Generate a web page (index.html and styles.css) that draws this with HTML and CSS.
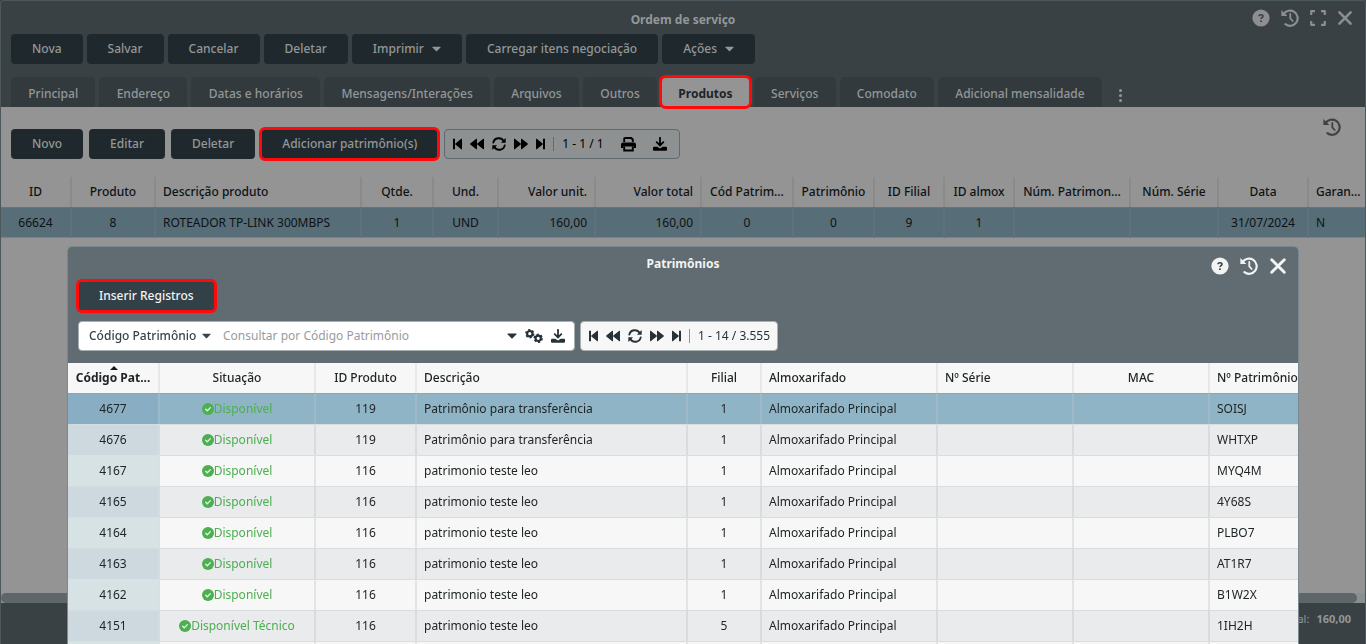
FILE: index.html
```html
<!DOCTYPE html>
<html lang="pt-BR">
<head>
<meta charset="utf-8">
<title>Ordem de serviço</title>
<link rel="stylesheet" href="styles.css">
</head>
<body>
<svg class="sprite" aria-hidden="true">
  <symbol id="help" viewBox="0 0 18 18"><circle cx="9" cy="9" r="8.600" fill="currentColor"/><path d="M7 7.300c.1-2.200 4.200-2.200 4 .1-.1 1.200-2 1.300-2 2.600" fill="none" class="cut" stroke-width="1.500"/><rect x="8.100" y="11.300" width="1.700" height="1.700" class="cutfill"/></symbol>
  <symbol id="history" viewBox="0 0 18 18"><path d="M2.600 5.200A7.600 7.600 0 1 1 4.400 15.200" fill="none" stroke="currentColor" stroke-width="2.200" stroke-linecap="round"/><path d="M.4.900v6h6z" fill="currentColor"/><path d="M9.300 5v4.400l2.400 2.600" fill="none" stroke="currentColor" stroke-width="1.800" stroke-linecap="round"/></symbol>
  <symbol id="expand" viewBox="0 0 16 16"><path d="M1.200 5V1.200H5M11 1.200h3.800V5M14.800 11v3.800H11M5 14.800H1.200V11" fill="none" stroke="currentColor" stroke-width="2.200" stroke-linejoin="round"/></symbol>
  <symbol id="close" viewBox="0 0 16 16"><path d="M2.400 2.400l11.200 11.200M13.600 2.400L2.400 13.600" fill="none" stroke="currentColor" stroke-width="2.600" stroke-linecap="round"/></symbol>
  <symbol id="caret" viewBox="0 0 10 6"><path d="M1 .4h8q.9.1.4.8L5.600 5.200q-.6.5-1.200 0L.6 1.200Q.1.500 1 .4z" fill="currentColor"/></symbol>
  <symbol id="first" viewBox="0 0 9 12"><path d="M0 .8h2v10.400H0zM9 1v10q0 .6-.7.200L2.400 6.500q-.5-.5 0-1L8.300.8Q9 .4 9 1z" fill="currentColor"/></symbol>
  <symbol id="last" viewBox="0 0 9 12"><path d="M9 .8H7v10.400h2zM0 1v10q0 .6.7.200l5.900-4.700q.5-.5 0-1L.7.800Q0 .4 0 1z" fill="currentColor"/></symbol>
  <symbol id="rewind" viewBox="0 0 14 12"><path d="M7 1v10q0 .6-.7.200L.3 6.500q-.4-.5 0-1L6.300.8Q7 .4 7 1zM14 1v10q0 .6-.7.200L7.300 6.500q-.4-.5 0-1L13.300.8Q14 .4 14 1z" fill="currentColor"/></symbol>
  <symbol id="forward" viewBox="0 0 14 12"><path d="M7 1v10q0 .6.7.200l6-4.700q.4-.5 0-1L7.700.8Q7 .4 7 1zM0 1v10q0 .6.7.200l6-4.700q.4-.5 0-1L.7.8Q0 .4 0 1z" fill="currentColor"/></symbol>
  <symbol id="refresh" viewBox="0 0 14 14"><path d="M1.300 5.600A5.600 5.600 0 0 1 11.600 4M12.700 8.400A5.600 5.600 0 0 1 2.400 10" fill="none" stroke="currentColor" stroke-width="1.900" stroke-linecap="round"/><path d="M13.700.9v4.800H8.900zM.3 13.100V8.300h4.800z" fill="currentColor"/></symbol>
  <symbol id="print" viewBox="0 0 15 15"><path d="M3.200 5V2q0-1 1-1h6l1.600 1.500V5" fill="none" stroke="currentColor" stroke-width="1.900"/><path d="M2 5.500h11q2 0 2 2V11h-2.300V9.500H2.300V11H0V7.500q0-2 2-2z" fill="currentColor"/><path d="M3.200 9.500v4h8.600v-4" fill="none" stroke="currentColor" stroke-width="1.900"/></symbol>
  <symbol id="download" viewBox="0 0 14 14"><path d="M7 .8v7M3.700 5.200L7 8.400l3.300-3.200" fill="none" stroke="currentColor" stroke-width="1.800" stroke-linecap="round"/><path d="M1 9.800h3.200L7 11.600l2.800-1.800H13q1 0 1 1v2q0 1-1 1H1q-1 0-1-1v-2q0-1 1-1z" fill="currentColor"/></symbol>
  <symbol id="cogs" viewBox="0 0 18 14"><g fill="none" stroke="currentColor"><circle cx="4.800" cy="4.700" r="2.700" stroke-width="2.200"/><circle cx="4.800" cy="4.700" r="4" stroke-width="1.400" stroke-dasharray="2.100 2.090"/><circle cx="13.200" cy="9.300" r="2.700" stroke-width="2.200"/><circle cx="13.200" cy="9.300" r="4" stroke-width="1.400" stroke-dasharray="2.100 2.090"/></g></symbol>
  <symbol id="check" viewBox="0 0 12 12"><circle cx="6" cy="6" r="6" fill="currentColor"/><path d="M3.700 6.200l1.600 1.600 3.100-3.200" fill="none" stroke="#e6f2e7" stroke-width="1.300" stroke-linecap="round"/></symbol>
</svg>

<main class="window">
  <header class="window-head">
    <div class="title-bar">
      <h1 class="title">Ordem de serviço</h1>
      <div class="controls">
        <button class="icon-btn" aria-label="Ajuda"><svg class="i18"><use href="#help"/></svg></button>
        <button class="icon-btn" aria-label="Histórico"><svg class="i18"><use href="#history"/></svg></button>
        <button class="icon-btn" aria-label="Maximizar"><svg class="i16"><use href="#expand"/></svg></button>
        <button class="icon-btn" aria-label="Fechar"><svg class="i16"><use href="#close"/></svg></button>
      </div>
    </div>
    <div class="actions">
      <button class="btn">Nova</button>
      <button class="btn">Salvar</button>
      <button class="btn">Cancelar</button>
      <button class="btn">Deletar</button>
      <button class="btn">Imprimir <svg class="caret"><use href="#caret"/></svg></button>
      <button class="btn">Carregar itens negociação</button>
      <button class="btn">Ações <svg class="caret"><use href="#caret"/></svg></button>
    </div>
    <nav class="tabs">
      <button class="tab">Principal</button>
      <button class="tab">Endereço</button>
      <button class="tab">Datas e horários</button>
      <button class="tab">Mensagens/Interações</button>
      <button class="tab">Arquivos</button>
      <button class="tab">Outros</button>
      <button class="tab active marked">Produtos</button>
      <button class="tab">Serviços</button>
      <button class="tab">Comodato</button>
      <button class="tab">Adicional mensalidade</button>
      <button class="more" aria-label="Mais abas"><i></i><i></i><i></i></button>
    </nav>
  </header>

  <section class="content">
    <div class="toolbar">
      <button class="btn">Novo</button>
      <button class="btn">Editar</button>
      <button class="btn">Deletar</button>
      <button class="btn marked">Adicionar patrimônio(s)</button>
      <div class="pager pager-dim">
        <button class="icon-btn" aria-label="Primeira"><svg class="i9"><use href="#first"/></svg></button>
        <button class="icon-btn" aria-label="Anterior"><svg class="i14"><use href="#rewind"/></svg></button>
        <button class="icon-btn" aria-label="Atualizar"><svg class="i14"><use href="#refresh"/></svg></button>
        <button class="icon-btn" aria-label="Próxima"><svg class="i14"><use href="#forward"/></svg></button>
        <button class="icon-btn" aria-label="Última"><svg class="i9"><use href="#last"/></svg></button>
        <span class="count">1 - 1 / 1</span>
        <button class="icon-btn tool" aria-label="Imprimir"><svg class="i15"><use href="#print"/></svg></button>
        <button class="icon-btn tool" aria-label="Baixar"><svg class="i14"><use href="#download"/></svg></button>
      </div>
      <button class="icon-btn log" aria-label="Histórico"><svg class="i18"><use href="#history"/></svg></button>
    </div>
    <table class="grid products">
      <colgroup><col class="w71"><col class="w84"><col class="w206"><col class="w72"><col class="w65"><col class="w97"><col class="w106"><col class="w92"><col class="w81"><col class="w70"><col class="w70"><col class="w116"><col class="w88"><col class="w90"><col></colgroup>
      <thead><tr><th>ID</th><th>Produto</th><th class="left">Descrição produto</th><th>Qtde.</th><th>Und.</th><th class="right">Valor unit.</th><th class="right">Valor total</th><th>Cód Patrim...</th><th class="snug">Patrimônio</th><th>ID Filial</th><th>ID almox</th><th>Núm. Patrimon...</th><th>Núm. Série</th><th>Data</th><th class="left snug">Garan...</th></tr></thead>
      <tbody><tr><td>66624</td><td>8</td><td class="left">ROTEADOR TP-LINK 300MBPS</td><td>1</td><td>UND</td><td class="right">160,00</td><td class="right">160,00</td><td>0</td><td>0</td><td>9</td><td>1</td><td></td><td></td><td>31/07/2024</td><td class="left">N</td></tr></tbody>
    </table>
    <div class="scroll"><div class="thumb"></div></div>
  </section>
  <footer class="totals"><span>Total:</span><strong>160,00</strong></footer>
</main>

<section class="modal" role="dialog" aria-labelledby="modal-title">
  <header class="modal-head">
    <div class="title-bar">
      <h2 class="title" id="modal-title">Patrimônios</h2>
      <div class="controls">
        <button class="icon-btn" aria-label="Ajuda"><svg class="i18"><use href="#help"/></svg></button>
        <button class="icon-btn" aria-label="Histórico"><svg class="i18"><use href="#history"/></svg></button>
        <button class="icon-btn" aria-label="Fechar"><svg class="i18"><use href="#close"/></svg></button>
      </div>
    </div>
    <div class="actions"><button class="btn marked">Inserir Registros</button></div>
    <div class="search-row">
      <div class="search">
        <label class="field"><select aria-label="Campo de busca"><option>Código Patrimônio</option></select><svg class="field-caret"><use href="#caret"/></svg></label>
        <input type="text" aria-label="Consultar" placeholder="Consultar por Código Patrimônio">
        <button class="icon-btn" aria-label="Opções"><svg class="caret10"><use href="#caret"/></svg></button>
        <button class="icon-btn" aria-label="Configurar"><svg class="cogs"><use href="#cogs"/></svg></button>
        <button class="icon-btn" aria-label="Baixar"><svg class="i14"><use href="#download"/></svg></button>
      </div>
      <div class="pager">
        <button class="icon-btn" aria-label="Primeira"><svg class="i9"><use href="#first"/></svg></button>
        <button class="icon-btn" aria-label="Anterior"><svg class="i14"><use href="#rewind"/></svg></button>
        <button class="icon-btn" aria-label="Atualizar"><svg class="i14"><use href="#refresh"/></svg></button>
        <button class="icon-btn" aria-label="Próxima"><svg class="i14"><use href="#forward"/></svg></button>
        <button class="icon-btn" aria-label="Última"><svg class="i9"><use href="#last"/></svg></button>
        <span class="count">1 - 14 / 3.555</span>
      </div>
    </div>
  </header>
  <div class="grid-wrap">
    <table class="grid assets">
      <colgroup><col class="w92"><col class="w156"><col class="w101"><col class="w271"><col class="w74"><col class="w176"><col class="w136"><col class="w136"><col></colgroup>
      <thead><tr><th class="sorted snug">Código Pat...</th><th>Situação</th><th>ID Produto</th><th class="left">Descrição</th><th>Filial</th><th class="left">Almoxarifado</th><th class="left">Nº Série</th><th>MAC</th><th class="left">Nº Patrimônio</th></tr></thead>
      <tbody>
        <tr class="selected"><td>4677</td><td class="ok"><svg><use href="#check"/></svg>Disponível</td><td>119</td><td class="left">Patrimônio para transferência</td><td>1</td><td class="left">Almoxarifado Principal</td><td></td><td></td><td class="left">SOISJ</td></tr>
        <tr><td>4676</td><td class="ok"><svg><use href="#check"/></svg>Disponível</td><td>119</td><td class="left">Patrimônio para transferência</td><td>1</td><td class="left">Almoxarifado Principal</td><td></td><td></td><td class="left">WHTXP</td></tr>
        <tr><td>4167</td><td class="ok"><svg><use href="#check"/></svg>Disponível</td><td>116</td><td class="left">patrimonio teste leo</td><td>1</td><td class="left">Almoxarifado Principal</td><td></td><td></td><td class="left">MYQ4M</td></tr>
        <tr><td>4165</td><td class="ok"><svg><use href="#check"/></svg>Disponível</td><td>116</td><td class="left">patrimonio teste leo</td><td>1</td><td class="left">Almoxarifado Principal</td><td></td><td></td><td class="left">4Y68S</td></tr>
        <tr><td>4164</td><td class="ok"><svg><use href="#check"/></svg>Disponível</td><td>116</td><td class="left">patrimonio teste leo</td><td>1</td><td class="left">Almoxarifado Principal</td><td></td><td></td><td class="left">PLBO7</td></tr>
        <tr><td>4163</td><td class="ok"><svg><use href="#check"/></svg>Disponível</td><td>116</td><td class="left">patrimonio teste leo</td><td>1</td><td class="left">Almoxarifado Principal</td><td></td><td></td><td class="left">AT1R7</td></tr>
        <tr><td>4162</td><td class="ok"><svg><use href="#check"/></svg>Disponível</td><td>116</td><td class="left">patrimonio teste leo</td><td>1</td><td class="left">Almoxarifado Principal</td><td></td><td></td><td class="left">B1W2X</td></tr>
        <tr><td>4151</td><td class="ok"><svg><use href="#check"/></svg>Disponível Técnico</td><td>116</td><td class="left">patrimonio teste leo</td><td>5</td><td class="left">Almoxarifado Principal</td><td></td><td></td><td class="left">1IH2H</td></tr>
        <tr><td></td><td></td><td></td><td></td><td></td><td></td><td></td><td></td><td></td></tr>
      </tbody>
    </table>
  </div>
</section>
</body>
</html>
```
FILE: styles.css
```css
* { box-sizing: border-box; }
body { margin: 0; height: 100vh; overflow: hidden; background: #394144; font: 12px/18px "Noto Sans", "Open Sans", sans-serif; }
button, input, select { font: inherit; color: inherit; border: 0; margin: 0; padding: 0; background: none; }
svg { display: block; flex: none; }
.sprite { position: absolute; width: 0; height: 0; }
.cut { stroke: #394144; }
.cutfill { fill: #394144; }

.i9 { width: 9px; height: 12px; }
.i14 { width: 14px; height: 14px; }
.i15 { width: 15px; height: 15px; }
.i16 { width: 16px; height: 16px; }
.i18 { width: 18px; height: 18px; }
.caret { width: 9px; height: 6px; }
.caret10 { width: 10px; height: 6px; }
.cogs { width: 18px; height: 14px; }
.icon-btn { display: flex; align-items: center; justify-content: center; }

.window { height: 100vh; display: flex; flex-direction: column; border: 1px solid #4d585c; border-bottom: 0; border-radius: 4px 4px 0 0; background: #394144; }
.window-head { color: #949799; padding: 0 10px; }
.title-bar { display: grid; grid-template-columns: 1fr auto 1fr; }
.title { grid-column: 2; margin: 0; font-size: 12px; line-height: 18px; font-weight: 700; padding-top: 10px; }
.controls { display: flex; justify-content: flex-end; align-items: center; gap: 11px; }
.window-head .controls { padding: 7px 2px 0 0; height: 26px; color: #8c8e90; }
.window-head .title-bar { height: 33px; }
.actions { display: flex; gap: 4px; }
.btn { display: flex; align-items: center; justify-content: center; gap: 8px; height: 30px; padding: 0 21px; border-radius: 4px; background: #1f292d; color: #949799; font-weight: 500; white-space: nowrap; }
.tabs { display: flex; gap: 4px; max-width: 1124px; margin-top: 13px; }
.tab { flex: 1 0 auto; height: 30px; padding: 3px 16px 0; border-radius: 5px 5px 0 0; background: #323a3d; font-weight: 500; white-space: nowrap; }
.tab.active { background: #949494; color: #1c2529; font-weight: 700; border-radius: 5px; }
.marked { position: relative; z-index: 1; outline: 3px solid #ff0a0a; outline-offset: -1px; }
.more { display: flex; flex-direction: column; align-items: center; gap: 2px; padding: 12px 13px 0; }
.more i { width: 3px; height: 3px; border-radius: 2px; background: #949799; }

.content { flex: 1; display: flex; flex-direction: column; background: #949494; }
.toolbar { display: flex; gap: 6px; padding: 22px 10px 0; color: #060a0c; }
.pager { display: flex; align-items: center; gap: 8px; height: 30px; padding: 0 7px 0 8px; border: 1px solid #a9b0b4; border-radius: 4px; background: #f7f7f7; color: #263238; }
.pager-dim { background: #8e9191; border-color: #5f6a6e; color: #000; padding: 0 12px 0 8px; }
.count { border-left: 1px solid #8b9397; padding-left: 8px; line-height: 14px; white-space: nowrap; }
.pager-dim .count { border-color: #5f6a6e; }
.tool { margin-left: 9px; }
.log { margin-left: auto; align-self: flex-start; padding-right: 14px; margin-top: -11px; color: #3f4243; }

.grid { border-collapse: separate; border-spacing: 0; table-layout: fixed; width: 100%; }
.grid th, .grid td { height: 31px; padding: 0 7px; text-align: center; white-space: nowrap; overflow: hidden; text-overflow: ellipsis; }
.grid th { height: 30px; font-weight: 500; }
.grid .left { text-align: left; }
.grid .right { text-align: right; }
.grid .snug { padding-right: 2px; }
.grid .snug:not(.left) { padding-left: 2px; }
.products { margin-top: 18px; color: #0d1214; }
.products th { border-right: 2px solid #8a8a8a; }
.products td { background: #576d77; border-right: 2px solid #5f7279; border-bottom: 1px solid #75858d; border-top: 1px solid #66757b; }
.products th:last-child, .products td:last-child { border-right: 0; }
.w65 { width: 65px; } .w70 { width: 70px; } .w71 { width: 71px; } .w72 { width: 72px; }
.w74 { width: 74px; } .w81 { width: 81px; } .w84 { width: 84px; } .w88 { width: 88px; }
.w90 { width: 90px; } .w92 { width: 92px; } .w97 { width: 97px; } .w101 { width: 101px; }
.w106 { width: 106px; } .w116 { width: 116px; } .w136 { width: 136px; } .w156 { width: 156px; }
.w176 { width: 176px; } .w206 { width: 206px; } .w271 { width: 271px; }
.scroll { margin-top: auto; background: #899092; }
.thumb { height: 10px; margin-right: 8px; border-radius: 5px; background: #5f6669; }
.totals { height: 41px; padding: 7px 14px 0; display: flex; justify-content: flex-end; gap: 7px; font-size: 11px; color: #949799; }

.modal { position: fixed; z-index: 2; top: 246px; left: 67px; right: 67px; bottom: 0; display: flex; flex-direction: column; overflow: hidden; border: 1px solid #7a8990; border-bottom: 0; border-radius: 4px 4px 0 0; background: #f7f7f7; }
.modal-head { padding: 0 10px 12px; background: #606c71; color: #f2f3f3; }
.modal-head .title-bar { height: 34px; }
.modal-head .title { padding-top: 8px; }
.modal-head .controls { height: 30px; padding: 8px 1px 0 0; }
.modal .cut { stroke: #606c71; }
.modal .btn { background: #324047; color: #f2f3f3; }
.search-row { display: flex; gap: 5px; margin-top: 10px; }
.search { display: flex; align-items: center; gap: 8px; flex: 0 1 497px; height: 30px; padding: 0 9px 0 10px; border: 1px solid #a9b0b4; border-radius: 4px; background: #fff; color: #263238; }
.field { position: relative; display: flex; align-items: center; color: #37444a; font-weight: 500; }
.field select { appearance: none; padding-right: 18px; }
.field-caret { position: absolute; right: 4px; width: 9px; height: 6px; }
.search input { flex: 1; min-width: 0; height: 28px; padding-bottom: 2px; outline: 0; }
.search input::placeholder { color: #9b9b9b; opacity: 1; }

.grid-wrap { overflow: hidden; }
.assets { width: 100%; min-width: 1290px; color: #202628; }
.assets th { position: relative; background: #f7f7f7; border-right: 2px solid #e7e8e8; }
.assets td { background: #f7f7f7; border-right: 2px solid #e1e3e4; border-top: 1px solid #dadddf; }
.assets tr:nth-child(even) td { background: #e9ebec; border-right-color: #d9dcdd; }
.assets tr td:first-child { background: #d7e2e5; border-color: #d7e0e4; }
.assets tr:nth-child(even) td:first-child { background: #cdd8df; border-color: #d2dce1; }
.assets .selected td { background: #8fb4c6; border-right-color: #9fbac7; border-top-color: #88a6b4; }
.assets .selected td:first-child { background: #89aec3; border-right-color: #9bb9c8; border-top-color: #88a6b4; }
.assets .sorted { font-weight: 700; }
.sorted::before { content: ""; position: absolute; top: 3px; left: 42px; border: 4px solid transparent; border-top: 0; border-bottom-color: #14191b; }
.assets .ok { color: #4caf50; }
.ok svg { display: inline-block; width: 12px; height: 12px; vertical-align: -2px; }
```
